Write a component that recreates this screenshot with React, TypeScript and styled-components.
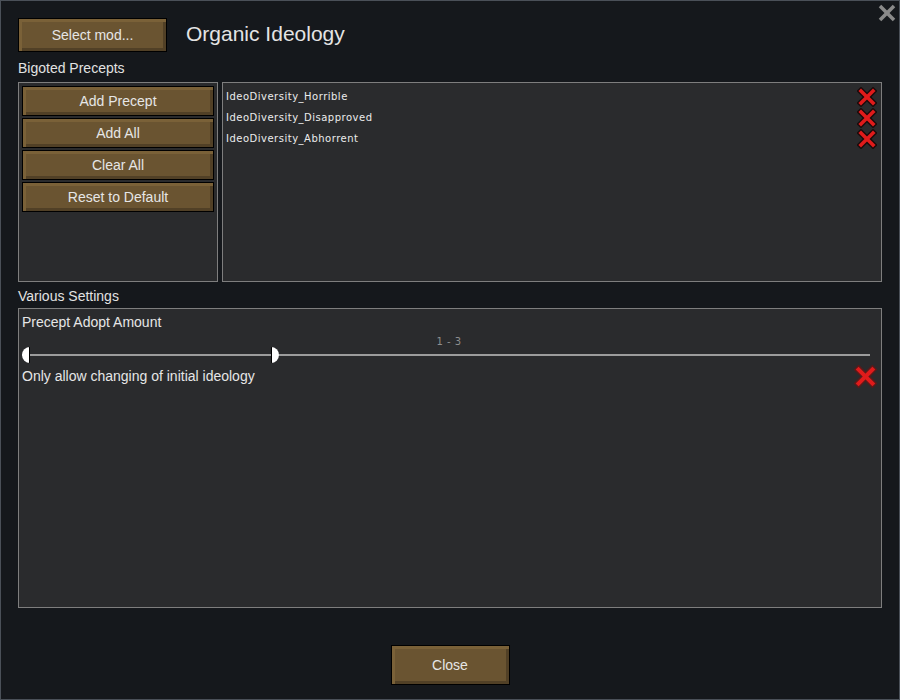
import React, { FC } from 'react';
import styled, { createGlobalStyle } from 'styled-components';

const GlobalStyle = createGlobalStyle`
  html, body {
    margin: 0;
    padding: 0;
    background: #15181c;
  }
  body {
    font-family: "Liberation Sans", Arial, sans-serif;
    color: #e2e2e2;
  }
`;

const precepts = [
  'IdeoDiversity_Horrible',
  'IdeoDiversity_Disapproved',
  'IdeoDiversity_Abhorrent'
];

const leftButtons = ['Add Precept', 'Add All', 'Clear All', 'Reset to Default'];

const RemoveIcon: FC<{ size?: number; soft?: boolean }> = ({ size = 20, soft }) => (
  <svg width={size} height={size} viewBox='0 0 20 20'>
    <g strokeLinecap='square'>
      <line x1='4' y1='4' x2='16' y2='16' stroke={soft ? '#5a1a1a' : '#1a0a0a'} strokeWidth='6.2' />
      <line x1='16' y1='4' x2='4' y2='16' stroke={soft ? '#5a1a1a' : '#1a0a0a'} strokeWidth='6.2' />
      <line x1='4' y1='4' x2='16' y2='16' stroke='#e01b1b' strokeWidth='3.6' />
      <line x1='16' y1='4' x2='4' y2='16' stroke='#e01b1b' strokeWidth='3.6' />
    </g>
  </svg>
);

export default function App() {
  // slider positions as fraction of the track (1..3 out of the full range)
  const low = 0;
  const high = 0.2936;

  return (<>
    <GlobalStyle />
    <Window>
      <CloseCross aria-label='close'>
        <svg width='18' height='18' viewBox='0 0 18 18'>
          <line x1='2' y1='2' x2='16' y2='16' stroke='#8a8a8a' strokeWidth='3.6' />
          <line x1='16' y1='2' x2='2' y2='16' stroke='#8a8a8a' strokeWidth='3.6' />
        </svg>
      </CloseCross>

      <Header>
        <WoodButton width={149} height={34}>Select mod...</WoodButton>
        <Title>Organic Ideology</Title>
      </Header>

      <SectionLabel>Bigoted Precepts</SectionLabel>
      <PreceptRow>
        <Panel width={200}>
          <ButtonStack>
            {leftButtons.map(label => (
              <WoodButton key={label} height={30}>{label}</WoodButton>
            ))}
          </ButtonStack>
        </Panel>
        <Panel grow>
          <List>
            {precepts.map(p => (
              <ListItem key={p}>
                <TinyText>{p}</TinyText>
                <RemoveIcon size={20} />
              </ListItem>
            ))}
          </List>
        </Panel>
      </PreceptRow>

      <SectionLabel spaced>Various Settings</SectionLabel>
      <SettingsPanel>
        <SettingLabel>Precept Adopt Amount</SettingLabel>
        <RangeSlider>
          <RangeValue>1 - 3</RangeValue>
          <Track />
          <Handle side='left' style={{ left: `${low * 100}%` }} />
          <Handle side='right' style={{ left: `${high * 100}%` }} />
        </RangeSlider>
        <CheckRow>
          <SettingLabel>Only allow changing of initial ideology</SettingLabel>
          <RemoveIcon size={23} soft />
        </CheckRow>
      </SettingsPanel>

      <Footer>
        <WoodButton width={119} height={40}>Close</WoodButton>
      </Footer>
    </Window>
  </>);
}

const Window = styled.div`
  position: relative;
  box-sizing: border-box;
  width: 900px;
  height: 700px;
  border: 1px solid #4a5058;
  background: #15181c;
  padding: 17px 17px 0 17px;
  display: flex;
  flex-direction: column;
`;

const CloseCross = styled.div`
  position: absolute;
  top: 3px;
  right: 3px;
  width: 18px;
  height: 18px;
  display: flex;
`;

const Header = styled.div`
  display: flex;
  align-items: center;
  gap: 19px;
  height: 34px;
`;

const Title = styled.div`
  font-size: 21px;
  color: #e4e4e4;
  padding-bottom: 2px;
`;

const WoodButton = styled.div<{ width?: number; height: number }>`
  box-sizing: border-box;
  width: ${({ width }) => width ? `${width}px` : 'auto'};
  height: ${({ height }) => height}px;
  border: 1px solid #000;
  background: #6a5431;
  box-shadow:
    inset 3px 3px 0 #7a6138,
    inset -3px -3px 0 #514026;
  display: flex;
  align-items: center;
  justify-content: center;
  font-size: 14px;
  color: #e6e6e6;
  padding-bottom: 1px;
  flex-shrink: 0;
`;

const SectionLabel = styled.div<{ spaced?: boolean }>`
  font-size: 14px;
  line-height: 20px;
  color: #e2e2e2;
  margin-top: ${({ spaced }) => spaced ? 4 : 6}px;
  margin-bottom: ${({ spaced }) => spaced ? 2 : 4}px;
`;

const PreceptRow = styled.div`
  display: flex;
  gap: 4px;
  height: 200px;
`;

const Panel = styled.div<{ width?: number; grow?: boolean }>`
  box-sizing: border-box;
  ${({ width }) => width ? `width: ${width}px;` : ''}
  ${({ grow }) => grow ? 'flex: 1;' : ''}
  height: 100%;
  border: 1px solid #7e7e7e;
  background: #2a2b2d;
  padding: 3px;
`;

const ButtonStack = styled.div`
  display: flex;
  flex-direction: column;
  gap: 2px;
`;

const List = styled.div`
  display: flex;
  flex-direction: column;
`;

const ListItem = styled.div`
  display: flex;
  align-items: center;
  justify-content: space-between;
  height: 21px;
  padding-right: 1px;
`;

const TinyText = styled.span`
  font-family: "DejaVu Sans", sans-serif;
  font-size: 10px;
  letter-spacing: 0.5px;
  color: #ececec;
`;

const SettingsPanel = styled.div`
  box-sizing: border-box;
  height: 300px;
  border: 1px solid #7e7e7e;
  background: #2a2b2d;
  padding: 3px 4px 0 3px;
  display: flex;
  flex-direction: column;
`;

const SettingLabel = styled.div`
  font-size: 14px;
  line-height: 20px;
  color: #e6e6e6;
`;

const RangeSlider = styled.div`
  position: relative;
  height: 34px;
  margin-right: 7px;
  padding-left: 6px;
  display: flex;
  justify-content: center;
`;

const RangeValue = styled.span`
  font-family: "DejaVu Sans", sans-serif;
  font-size: 10px;
  letter-spacing: 0.5px;
  color: #8e8e8e;
  margin-top: 4px;
  line-height: 12px;
  height: 12px;
`;

const Track = styled.div`
  position: absolute;
  left: 0;
  right: 0;
  top: 22px;
  height: 2px;
  background: #9c9c9c;
`;

const Handle = styled.div<{ side: 'left' | 'right' }>`
  position: absolute;
  top: 15px;
  width: 8px;
  height: 16px;
  box-sizing: border-box;
  background: #fff;
  ${({ side }) => side === 'left'
    ? 'border-radius: 8px 0 0 8px; border-right: 1px solid #000;'
    : 'border-radius: 0 8px 8px 0; border-left: 1px solid #000;'}
`;

const CheckRow = styled.div`
  display: flex;
  align-items: center;
  justify-content: space-between;
  height: 20px;
`;

const Footer = styled.div`
  display: flex;
  justify-content: center;
  margin-top: 37px;
`;
